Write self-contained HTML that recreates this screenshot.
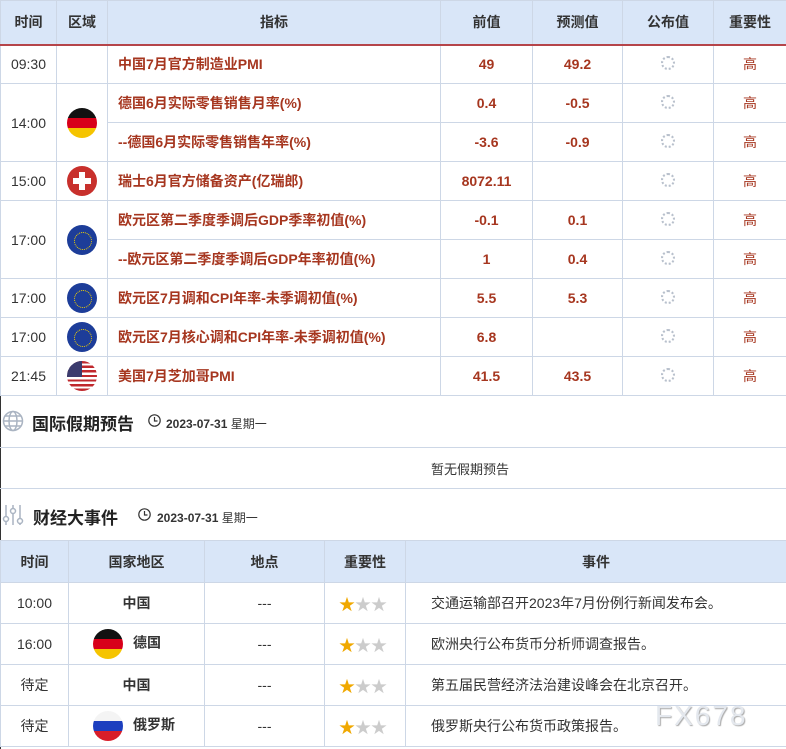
<!DOCTYPE html>
<html><head><meta charset="utf-8"><style>
*{margin:0;padding:0;box-sizing:border-box}
body{width:786px;height:749px;background:#fff;font-family:"Liberation Sans","Noto Sans CJK SC",sans-serif;position:relative;overflow:hidden;color:#333}
table{border-collapse:collapse;table-layout:fixed;position:absolute;left:0}
td,th{border:1px solid #cdd7e6;text-align:center;font-size:14px;padding:0;vertical-align:middle}
th{background:#d9e6f8;font-weight:bold;color:#333;font-size:14px}
#t1 th{border-bottom:2px solid #b5454a}
.r{color:#a6361f;font-weight:bold;font-size:14px}
.h{color:#a6361f;font-size:14px}
.ind{text-align:left;padding-left:10px}
.flag{width:30px;height:30px;border-radius:50%;display:inline-block;vertical-align:middle}
.de{background:linear-gradient(#111 0 33%,#d8001a 33% 66%,#f5c400 66%)}
.ch{background:#c8302c;position:relative}
.ch:before{content:"";position:absolute;left:12px;top:6px;width:6px;height:18px;background:#fff}
.ch:after{content:"";position:absolute;left:6px;top:12px;width:18px;height:6px;background:#fff}
.eu{background:#1d3d99;position:relative}
.eu:after{content:"";position:absolute;left:7px;top:7px;width:16px;height:16px;border-radius:50%;border:1.5px dotted #f0d000}
.us{background:repeating-linear-gradient(#c0282d 0 2.3px,#fff 2.3px 4.6px);position:relative;overflow:hidden}
.us:after{content:"";position:absolute;left:0;top:0;width:15px;height:16px;background:#3b3b6d}
.ru{background:linear-gradient(#f4f4f4 0 33%,#1c3fbf 33% 66%,#d81e2a 66%)}
.spin{display:inline-block;width:14px;height:14px;border-radius:50%;border:2px dotted #b8c0cc}
.star{color:#f0a800;font-size:16px}.gs{color:#ccc;font-size:16px}
.sec{position:absolute;left:0;font-size:17px;color:#222;font-weight:bold}
.dt{font-size:12px;font-weight:bold;color:#333}
</style></head><body>
<div style="position:absolute;left:0;top:0;width:1px;height:749px;background:#333"></div>
<table id="t1" style="top:0;width:786px">
<colgroup><col style="width:56px"><col style="width:51px"><col style="width:333px"><col style="width:92px"><col style="width:90px"><col style="width:91px"><col style="width:73px"></colgroup>
<tr style="height:44px"><th>时间</th><th>区域</th><th>指标</th><th>前值</th><th>预测值</th><th>公布值</th><th>重要性</th></tr>
<tr style="height:39px"><td>09:30</td><td></td><td class="r ind">中国7月官方制造业PMI</td><td class="r">49</td><td class="r">49.2</td><td><span class="spin"></span></td><td class="h">高</td></tr>
<tr style="height:39px"><td rowspan="2">14:00</td><td rowspan="2"><span class="flag de"></span></td><td class="r ind">德国6月实际零售销售月率(%)</td><td class="r">0.4</td><td class="r">-0.5</td><td><span class="spin"></span></td><td class="h">高</td></tr>
<tr style="height:39px"><td class="r ind">--德国6月实际零售销售年率(%)</td><td class="r">-3.6</td><td class="r">-0.9</td><td><span class="spin"></span></td><td class="h">高</td></tr>
<tr style="height:39px"><td>15:00</td><td><span class="flag ch"></span></td><td class="r ind">瑞士6月官方储备资产(亿瑞郎)</td><td class="r">8072.11</td><td></td><td><span class="spin"></span></td><td class="h">高</td></tr>
<tr style="height:39px"><td rowspan="2">17:00</td><td rowspan="2"><span class="flag eu"></span></td><td class="r ind">欧元区第二季度季调后GDP季率初值(%)</td><td class="r">-0.1</td><td class="r">0.1</td><td><span class="spin"></span></td><td class="h">高</td></tr>
<tr style="height:39px"><td class="r ind">--欧元区第二季度季调后GDP年率初值(%)</td><td class="r">1</td><td class="r">0.4</td><td><span class="spin"></span></td><td class="h">高</td></tr>
<tr style="height:39px"><td>17:00</td><td><span class="flag eu"></span></td><td class="r ind">欧元区7月调和CPI年率-未季调初值(%)</td><td class="r">5.5</td><td class="r">5.3</td><td><span class="spin"></span></td><td class="h">高</td></tr>
<tr style="height:39px"><td>17:00</td><td><span class="flag eu"></span></td><td class="r ind">欧元区7月核心调和CPI年率-未季调初值(%)</td><td class="r">6.8</td><td></td><td><span class="spin"></span></td><td class="h">高</td></tr>
<tr style="height:39px"><td>21:45</td><td><span class="flag us"></span></td><td class="r ind">美国7月芝加哥PMI</td><td class="r">41.5</td><td class="r">43.5</td><td><span class="spin"></span></td><td class="h">高</td></tr>
</table>
<svg style="position:absolute;left:2px;top:410px" width="22" height="22" viewBox="0 0 22 22" fill="none" stroke="#aab4c2" stroke-width="1.5"><circle cx="11" cy="11" r="9.5"/><ellipse cx="11" cy="11" rx="4" ry="9.5"/><path d="M1.5 11h19M3 6h16M3 16h16"/></svg>
<div class="sec" style="left:32px;top:410px">国际假期预告</div>
<svg style="position:absolute;left:148px;top:414px" width="13" height="13" viewBox="0 0 13 13" fill="none" stroke="#333" stroke-width="1.2"><circle cx="6.5" cy="6.5" r="5.7"/><path d="M6.5 3v4h3"/></svg>
<div class="dt" style="position:absolute;left:166px;top:415px">2023-07-31 <span style="font-weight:normal">星期一</span></div>
<div style="position:absolute;left:0;top:447px;width:786px;height:1px;background:#cdd7e6"></div>
<div style="position:absolute;left:431px;top:459px;font-size:13px;color:#333">暂无假期预告</div>
<div style="position:absolute;left:0;top:488px;width:786px;height:1px;background:#cdd7e6"></div>
<svg style="position:absolute;left:2px;top:504px" width="22" height="22" viewBox="0 0 22 22" fill="none" stroke="#aab4c2" stroke-width="1.5"><path d="M4 1v20M11 1v20M18 1v20"/><circle cx="4" cy="15" r="2.5" fill="#fff"/><circle cx="11" cy="7" r="2.5" fill="#fff"/><circle cx="18" cy="17" r="2.5" fill="#fff"/></svg>
<div class="sec" style="left:33px;top:504px">财经大事件</div>
<svg style="position:absolute;left:138px;top:508px" width="13" height="13" viewBox="0 0 13 13" fill="none" stroke="#333" stroke-width="1.2"><circle cx="6.5" cy="6.5" r="5.7"/><path d="M6.5 3v4h3"/></svg>
<div class="dt" style="position:absolute;left:157px;top:509px">2023-07-31 <span style="font-weight:normal">星期一</span></div>
<table style="top:540px;width:786px">
<colgroup><col style="width:68px"><col style="width:136px"><col style="width:120px"><col style="width:81px"><col style="width:381px"></colgroup>
<tr style="height:42px"><th>时间</th><th>国家地区</th><th>地点</th><th>重要性</th><th>事件</th></tr>
<tr style="height:41px"><td>10:00</td><td style="font-weight:bold">中国</td><td>---</td><td style="text-align:left;padding-left:14px"><span class="star">★</span><span class="gs">★★</span></td><td style="text-align:left;padding-left:25px">交通运输部召开2023年7月份例行新闻发布会。</td></tr>
<tr style="height:41px"><td>16:00</td><td style="text-align:left;padding-left:24px"><span class="flag de" style="margin-right:10px"></span><b>德国</b></td><td>---</td><td style="text-align:left;padding-left:14px"><span class="star">★</span><span class="gs">★★</span></td><td style="text-align:left;padding-left:25px">欧洲央行公布货币分析师调查报告。</td></tr>
<tr style="height:41px"><td>待定</td><td style="font-weight:bold">中国</td><td>---</td><td style="text-align:left;padding-left:14px"><span class="star">★</span><span class="gs">★★</span></td><td style="text-align:left;padding-left:25px">第五届民营经济法治建设峰会在北京召开。</td></tr>
<tr style="height:41px"><td>待定</td><td style="text-align:left;padding-left:24px"><span class="flag ru" style="margin-right:10px"></span><b>俄罗斯</b></td><td>---</td><td style="text-align:left;padding-left:14px"><span class="star">★</span><span class="gs">★★</span></td><td style="text-align:left;padding-left:25px">俄罗斯央行公布货币政策报告。</td></tr>
</table>
<div style="position:absolute;left:655px;top:700px;font-size:28px;color:#e4e8ee;letter-spacing:2px;text-shadow:1px 1px 1px #aaa">FX678</div>
</body></html>
